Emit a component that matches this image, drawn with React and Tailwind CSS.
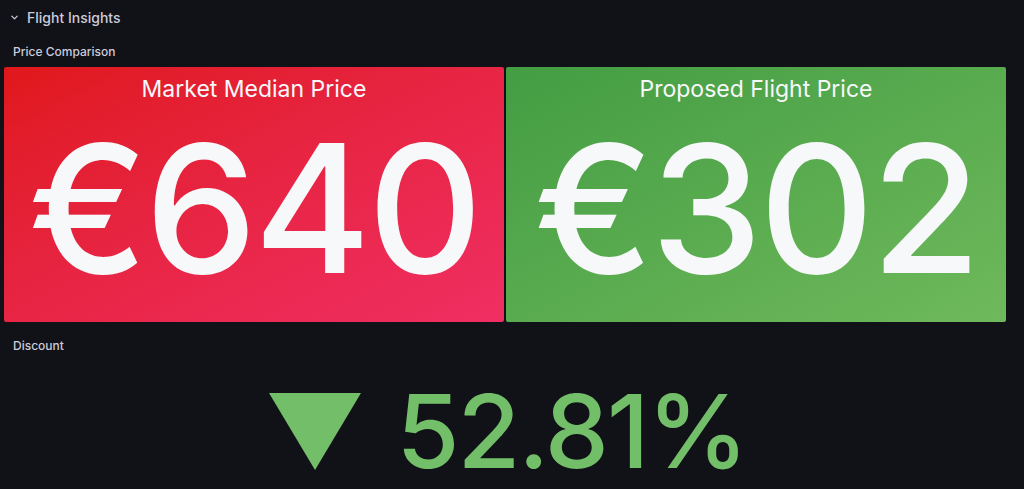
import React from 'react';

const font = { fontFamily: 'Inter, "Noto Sans", sans-serif' };

const StatBox = ({ title, value, gradient }) => (
  <div className={`flex-1 flex flex-col items-center rounded-[2px] ${gradient}`}>
    <div className="mt-[8px] text-[23px] leading-[28px] text-[#f7f8fa]">{title}</div>
    <div className="mt-[6px] text-[178px] leading-[200px] font-medium tracking-[-3px] text-[#f7f8fa]">{value}</div>
  </div>
);

const App = () => {
  return (
    <div className="w-full h-[489px] overflow-hidden bg-[#111217] text-[#ccccdc]" style={font}>
      <div className="h-[36px] flex items-center pl-[10px] pb-[1px] gap-[8px]">
        <svg width="9" height="9" viewBox="0 0 10 10" className="text-[#ccccdc]">
          <path d="M2 3.5 L5 6.5 L8 3.5" fill="none" stroke="currentColor" strokeWidth="1.4" strokeLinecap="round" strokeLinejoin="round" />
        </svg>
        <span className="text-[14px] font-medium">Flight Insights</span>
      </div>

      <div className="ml-[4px] w-[1002px]">
        <div className="h-[30px] flex items-center px-[9px] pt-[1px] text-[12px] font-medium">Price Comparison</div>
        <div className="flex gap-[2px] h-[255px] mt-[1px]">
          <StatBox title="Market Median Price" value="€640" gradient="bg-gradient-to-br from-[#e0181a] to-[#f02e62]" />
          <StatBox title="Proposed Flight Price" value="€302" gradient="bg-gradient-to-br from-[#439d43] to-[#6eb95b]" />
        </div>
      </div>

      <div className="ml-[4px] w-[1002px] mt-[8px]">
        <div className="h-[30px] flex items-center px-[9px] pt-[1px] text-[12px] font-medium">Discount</div>
        <div className="flex items-start justify-center gap-[35px] mt-[32px] pl-[6px] text-[#73bf69]">
          <svg width="92" height="77" viewBox="0 0 92 77" className="mt-[1px]">
            <polygon points="0,0 92,0 46,77" fill="currentColor" />
          </svg>
          <span className="text-[102px] leading-[78px] font-medium tracking-[-2px]">52.81%</span>
        </div>
      </div>
    </div>
  );
};

export default App;
